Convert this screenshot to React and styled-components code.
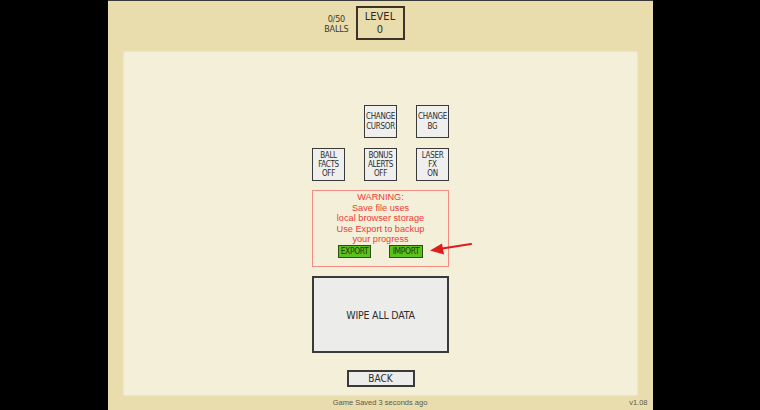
import React from 'react'
import styled, { createGlobalStyle } from 'styled-components'

const GlobalStyle = createGlobalStyle`
  html, body {
    margin: 0;
    padding: 0;
    background: #000;
  }
  body {
    font-family: "Liberation Sans", Arial, sans-serif;
  }
`

const pixelFont = `"Liberation Sans Narrow", "DejaVu Sans Condensed", "Liberation Sans", sans-serif`

const Screen = styled.div`
  width: 760px;
  height: 410px;
  display: flex;
  justify-content: center;
  background: #000;
`

const Game = styled.div`
  width: 545px;
  height: 410px;
  background: #e9ddad;
  border-top: 1px solid #3a3a3a;
  box-sizing: border-box;
  display: flex;
  flex-direction: column;
`

const Header = styled.div`
  height: 51px;
  display: grid;
  grid-template-columns: 1fr auto 1fr;
  align-items: start;
  padding-top: 5px;
  box-sizing: border-box;
`

const BallsLabel = styled.div`
  justify-self: end;
  margin: 8px 7px 0 0;
  font-family: ${pixelFont};
  font-size: 9px;
  line-height: 10px;
  color: #3d3a30;
  text-align: center;
  letter-spacing: -0.2px;
`

const LevelBox = styled.div`
  width: 49px;
  height: 34px;
  box-sizing: border-box;
  border: 2px solid #3b3426;
  display: flex;
  flex-direction: column;
  align-items: center;
  justify-content: center;
  font-family: ${pixelFont};
  font-size: 11px;
  line-height: 13px;
  color: #2f2a20;
`

const Panel = styled.div`
  flex: 0 0 343px;
  margin: 0 16px;
  background: #f4efd9;
  box-shadow: 0 0 2px rgba(255, 255, 240, 0.8);
  display: flex;
  flex-direction: column;
  align-items: center;
  padding-top: 53px;
  box-sizing: border-box;
`

const OptionGrid = styled.div`
  display: grid;
  grid-template-columns: repeat(3, 33px);
  grid-auto-rows: 33px;
  column-gap: 19px;
  row-gap: 10px;
  margin-left: 1px;
`

const OptionButton = styled.div`
  grid-column: ${p => p.col || 'auto'};
  box-sizing: border-box;
  border: 1.5px solid #3a3a3a;
  background: #efefed;
  display: flex;
  flex-direction: column;
  align-items: center;
  justify-content: center;
  font-family: ${pixelFont};
  font-size: 8px;
  line-height: 9.3px;
  color: #2e2e2e;
  letter-spacing: -0.3px;
  text-align: center;
`

const WarningBox = styled.div`
  position: relative;
  width: 137px;
  height: 77px;
  margin: 9px 0 0 1px;
  box-sizing: border-box;
  border: 1px solid #f28d83;
  padding-top: 1px;
  display: flex;
  flex-direction: column;
  align-items: center;
`

const WarningLine = styled.div`
  height: 10.5px;
  display: flex;
  align-items: center;
  font-family: "Liberation Sans", Arial, sans-serif;
  font-size: 9.2px;
  line-height: 10.5px;
  color: #ee3b36;
  white-space: nowrap;
`

const ButtonRow = styled.div`
  display: flex;
  gap: 18px;
  margin-top: 0;
`

const GreenButton = styled.div`
  width: ${p => p.w}px;
  height: 13px;
  box-sizing: border-box;
  border: 1.5px solid #2f4d12;
  background: #5cc01d;
  display: flex;
  align-items: center;
  justify-content: center;
  font-family: ${pixelFont};
  font-size: 8.5px;
  color: #1e3a08;
  letter-spacing: -0.4px;
`

const Arrow = styled.svg`
  position: absolute;
  left: 116px;
  top: 50px;
  width: 44px;
  height: 16px;
  overflow: visible;
`

const WipeBox = styled.div`
  width: 137px;
  height: 77px;
  margin: 9px 0 0 1px;
  box-sizing: border-box;
  border: 2px solid #3a3a3a;
  background: #ececeb;
  display: flex;
  align-items: center;
  justify-content: center;
  font-family: ${pixelFont};
  font-size: 10.5px;
  color: #2e2e2e;
  letter-spacing: -0.2px;
`

const BackButton = styled.div`
  width: 68px;
  height: 17px;
  margin: 17px 0 0 1px;
  box-sizing: border-box;
  border: 2px solid #3a3a3a;
  background: #ececeb;
  display: flex;
  align-items: center;
  justify-content: center;
  font-family: ${pixelFont};
  font-size: 10px;
  color: #2e2e2e;
`

const Footer = styled.div`
  flex: 1;
  display: grid;
  grid-template-columns: 1fr auto 1fr;
  align-items: center;
  font-family: "Liberation Sans", Arial, sans-serif;
  font-size: 7.5px;
  color: #5e5a4c;
  padding: 0 5px;
`

const Version = styled.span`
  justify-self: end;
`

const options = [
  { lines: ['CHANGE', 'CURSOR'], col: 2 },
  { lines: ['CHANGE', 'BG'] },
  { lines: ['BALL', 'FACTS', 'OFF'] },
  { lines: ['BONUS', 'ALERTS', 'OFF'] },
  { lines: ['LASER', 'FX', 'ON'] },
]

const warning = [
  'WARNING:',
  'Save file uses',
  'local browser storage',
  'Use Export to backup',
  'your progress',
]

export default function App() {
  return (
    <>
      <GlobalStyle />
      <Screen>
        <Game>
          <Header>
            <BallsLabel>0/50<br />BALLS</BallsLabel>
            <LevelBox>
              <span>LEVEL</span>
              <span>0</span>
            </LevelBox>
          </Header>

          <Panel>
            <OptionGrid>
              {options.map((opt, i) => (
                <OptionButton key={i} col={opt.col}>
                  {opt.lines.map(l => <span key={l}>{l}</span>)}
                </OptionButton>
              ))}
            </OptionGrid>

            <WarningBox>
              {warning.map(line => <WarningLine key={line}>{line}</WarningLine>)}
              <ButtonRow>
                <GreenButton w={33}>EXPORT</GreenButton>
                <GreenButton w={34}>IMPORT</GreenButton>
              </ButtonRow>
              {/* pointer at the import button */}
              <Arrow viewBox="0 0 44 16">
                <line x1="42" y1="3" x2="10" y2="8" stroke="#e01b1b" strokeWidth="2.2" strokeLinecap="round" />
                <polygon points="1,9.5 13,2.5 15,13.5" fill="#e01b1b" />
              </Arrow>
            </WarningBox>

            <WipeBox>WIPE ALL DATA</WipeBox>
            <BackButton>BACK</BackButton>
          </Panel>

          <Footer>
            <span />
            <span>Game Saved 3 seconds ago</span>
            <Version>v1.08</Version>
          </Footer>
        </Game>
      </Screen>
    </>
  )
}
